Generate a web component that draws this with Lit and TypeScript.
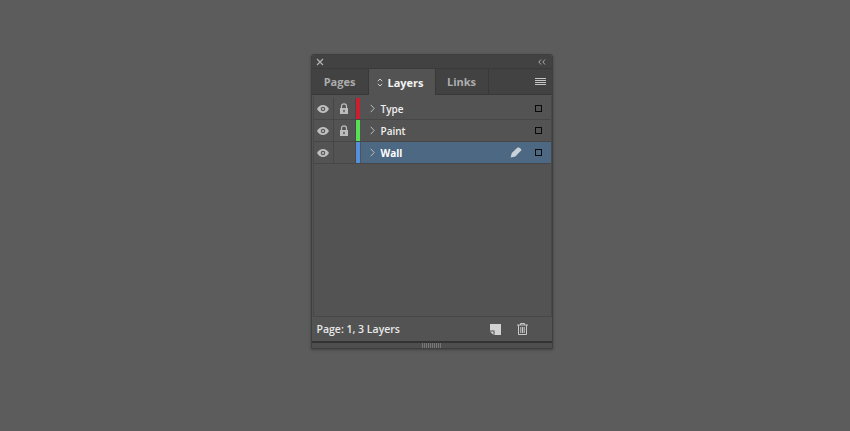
import { LitElement, html, css, svg } from "lit";
import { customElement } from "lit/decorators.js";

const layers = [
  { name: "Type", color: "#c8202e", locked: true, active: false },
  { name: "Paint", color: "#55e055", locked: true, active: false },
  { name: "Wall", color: "#5590dc", locked: false, active: true },
];

const eye = svg`<svg width="14" height="10" viewBox="0 0 14 10"><path d="M1 5c1.600-2.600 3.600-4 6-4s4.400 1.400 6 4c-1.600 2.600-3.600 4-6 4S2.600 7.600 1 5z" fill="#c0c0c0"/><circle cx="7" cy="5" r="2.300" fill="#5a5a5a"/><circle cx="7" cy="5" r="1.100" fill="#c0c0c0"/></svg>`;
const lock = svg`<svg width="10" height="11" viewBox="0 0 10 11"><path d="M2.500 5V3.300a2.500 2.500 0 0 1 5 0V5" fill="none" stroke="#bdbdbd" stroke-width="1.200"/><rect x="1" y="5" width="8" height="6" fill="#bdbdbd"/><rect x="4.300" y="6.800" width="1.400" height="2.400" fill="#555"/></svg>`;
const chevron = svg`<svg width="5" height="9" viewBox="0 0 5 9"><path d="M.7 .8L4.200 4.500.7 8.200" fill="none" stroke="#bcbcbc" stroke-width="1"/></svg>`;
const pencil = svg`<svg width="12" height="11" viewBox="0 0 12 11"><path d="M7.500 .6c1.400-.7 4 1 3.800 2.700L5.400 9.400 .6 10.600l1.200-4.700z" fill="#c9d2da"/></svg>`;

@customElement("app-root")
export class AppRoot extends LitElement {
  static styles = css`
    :host {
      display: block;
      width: 850px;
      height: 431px;
      background: #5c5c5c;
      font-family: "Open Sans", "Noto Sans", sans-serif;
      overflow: hidden;
    }
    .stage {
      display: flex;
      justify-content: center;
      padding: 54px 0 0 13px;
      width: 837px;
    }
    .panel {
      width: 240px;
      height: 293px;
      display: flex;
      flex-direction: column;
      background: #535353;
      border: 1px solid #3e3e3e;
      border-radius: 3px 3px 0 0;
      box-shadow: 0 1px 3px rgba(0, 0, 0, 0.3);
    }
    .titlebar {
      height: 13px;
      flex: none;
      background: #424242;
      display: flex;
      align-items: center;
      justify-content: space-between;
      padding: 0 6px 0 4px;
      border-radius: 3px 3px 0 0;
    }
    .tabs {
      height: 27px;
      flex: none;
      display: flex;
      background: #424242;
      border-top: 1px solid #3a3a3a;
      border-bottom: 1px solid #383838;
      box-sizing: border-box;
    }
    .tab {
      display: flex;
      align-items: center;
      justify-content: center;
      font-size: 11px;
      font-weight: 700;
      color: #adadad;
      border-right: 1px solid #383838;
      box-sizing: border-box;
    }
    .tab.pages { width: 57px; }
    .tab.links { width: 53px; }
    .tab.layers {
      width: 67px;
      gap: 4px;
      padding-right: 2px;
      color: #f2f2f2;
      background: #535353;
      margin-bottom: -1px;
    }
    .tab-spacer {
      flex: 1;
      display: flex;
      align-items: center;
      justify-content: flex-end;
      padding-right: 6px;
    }
    .list {
      flex: 1;
      margin: 1px 0 0 1px;
      padding-top: 2px;
      border: 1px solid #484848;
      border-top: 0;
      display: flex;
      flex-direction: column;
    }
    .row {
      height: 22px;
      flex: none;
      box-sizing: border-box;
      display: flex;
      align-items: stretch;
      border-bottom: 1px solid #474747;
      color: #f0f0f0;
      font-size: 10px;
      font-weight: 600;
    }
    .cell {
      display: flex;
      align-items: center;
      justify-content: center;
      border-right: 1px solid #474747;
      box-sizing: border-box;
      flex: none;
    }
    .eye { width: 20px; }
    .lock { width: 22px; }
    .swatch { width: 4px; margin-right: 1px; flex: none; }
    .name {
      flex: 1;
      display: flex;
      align-items: center;
      padding-left: 9px;
      gap: 6px;
    }
    .row.active .name { background: #4d6882; font-weight: 700; color: #fff; }
    .pencil { margin-left: auto; margin-right: 7px; display: flex; }
    .sel {
      width: 5px;
      height: 5px;
      border: 1px solid #0a0a0a;
      margin-right: 9px;
      flex: none;
    }
    .row:not(.active) .sel { margin-left: auto; }
    .footer {
      height: 24px;
      flex: none;
      display: flex;
      align-items: center;
      padding: 0 24px 0 5px;
      font-size: 10.500px;
      font-weight: 600;
      color: #e8e8e8;
    }
    .footer .new { margin-left: auto; margin-right: 16px; display: flex; }
    .footer svg { display: block; }
    .grip {
      height: 7px;
      flex: none;
      box-sizing: border-box;
      border-top: 2px solid #333;
      background: #4e4e4e;
      display: flex;
      justify-content: center;
      align-items: center;
    }
    .dots {
      width: 20px;
      height: 5px;
      background: repeating-linear-gradient(90deg, #777 0 1px, #4e4e4e 1px 2px);
    }
  `;

  render() {
    return html`
      <div class="stage">
        <div class="panel">
          <div class="titlebar">
            <svg width="8" height="8" viewBox="0 0 8 8"><path d="M1 1l6 6M7 1L1 7" stroke="#b0b0b0" stroke-width="1.300"/></svg>
            <svg width="8" height="6" viewBox="0 0 8 6"><path d="M3 .5L.8 3 3 5.500M7 .5L4.800 3 7 5.500" fill="none" stroke="#aaa" stroke-width="1"/></svg>
          </div>
          <div class="tabs">
            <div class="tab pages">Pages</div>
            <div class="tab layers">
              <svg width="6" height="9" viewBox="0 0 6 9"><path d="M.8 3.200L3 1l2.200 2.200M.8 5.800L3 8l2.200-2.200" fill="none" stroke="#d0d0d0" stroke-width="1"/></svg>
              Layers
            </div>
            <div class="tab links">Links</div>
            <div class="tab-spacer">
              <svg width="11" height="8" viewBox="0 0 11 8"><path d="M0 .5h11M0 2.500h11M0 4.500h11M0 6.500h11" stroke="#c4c4c4" stroke-width="1"/></svg>
            </div>
          </div>
          <div class="list">
            ${layers.map(
              (l) => html`
                <div class="row ${l.active ? "active" : ""}">
                  <div class="cell eye">${eye}</div>
                  <div class="cell lock">${l.locked ? lock : ""}</div>
                  <div class="swatch" style="background:${l.color}"></div>
                  <div class="name">
                    ${chevron}<span>${l.name}</span>
                    ${l.active ? html`<span class="pencil">${pencil}</span>` : ""}
                    <span class="sel"></span>
                  </div>
                </div>
              `,
            )}
          </div>
          <div class="footer">
            <span>Page: 1, 3 Layers</span>
            <span class="new">
              <svg width="11" height="11" viewBox="0 0 11 11"><path d="M0 0h11v11H4.500V6.500H0z" fill="#d2d2d2"/><path d="M3.500 7.500V11L0 7.500z" fill="#d2d2d2"/></svg>
            </span>
            <svg width="11" height="12" viewBox="0 0 11 12"><path d="M0 2h11M3.500 2V.5h4V2M1.500 2v9.500h8V2M3.800 4v6M5.500 4v6M7.200 4v6" fill="none" stroke="#c8c8c8" stroke-width="1"/></svg>
          </div>
          <div class="grip"><div class="dots"></div></div>
        </div>
      </div>
    `;
  }
}
